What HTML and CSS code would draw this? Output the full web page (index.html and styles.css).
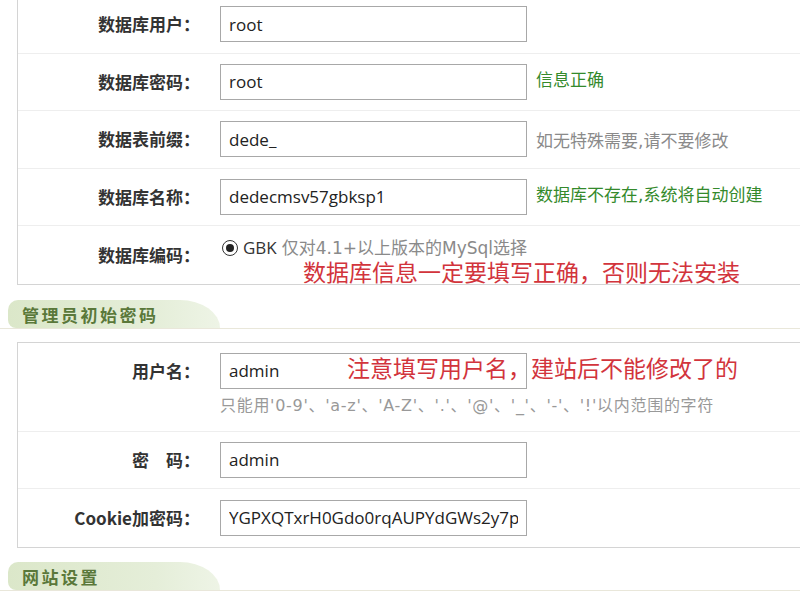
FILE: index.html
```html
<!DOCTYPE html>
<html lang="zh-CN">
  <head>
    <meta charset="UTF-8" />
    <title>安装 - 参数设置</title>
    <link rel="stylesheet" href="styles.css">
  </head>
  <body>
    <div class="box box-first">
      <div class="row">
        <div class="label">数据库用户：</div>
        <div class="field"><input class="txt" type="text" value="root"></div>
      </div>
      <div class="row">
        <div class="label">数据库密码：</div>
        <div class="field">
          <input class="txt" type="text" value="root">
          <span class="tip tip-ok">信息正确</span>
        </div>
      </div>
      <div class="row">
        <div class="label">数据表前缀：</div>
        <div class="field">
          <input class="txt" type="text" value="dede_">
          <span class="tip">如无特殊需要,请不要修改</span>
        </div>
      </div>
      <div class="row">
        <div class="label">数据库名称：</div>
        <div class="field">
          <input class="txt" type="text" value="dedecmsv57gbksp1">
          <span class="tip tip-ok">数据库不存在,系统将自动创建</span>
        </div>
      </div>
      <div class="row">
        <div class="label">数据库编码：</div>
        <div class="field field-radio">
          <span class="radio"></span>
          <span class="gbk">GBK</span>
          <span class="tip tip-inline">仅对4.1+以上版本的MySql选择</span>
        </div>
        <div class="note note-db">数据库信息一定要填写正确，否则无法安装</div>
      </div>
    </div>

    <div class="sect"><div class="tab">管理员初始密码</div></div>

    <div class="box">
      <div class="row row-tall">
        <div class="label">用户名：</div>
        <div class="field field-col">
          <input class="txt" type="text" value="admin">
          <span class="tip tip-small">只能用'0-9'、'a-z'、'A-Z'、'.'、'@'、'_'、'-'、'!'以内范围的字符</span>
        </div>
        <div class="note note-user">注意填写用户名，建站后不能修改了的</div>
      </div>
      <div class="row">
        <div class="label">密&emsp;码：</div>
        <div class="field"><input class="txt" type="text" value="admin"></div>
      </div>
      <div class="row">
        <div class="label">Cookie加密码：</div>
        <div class="field"><input class="txt" type="text" value="YGPXQTxrH0Gdo0rqAUPYdGWs2y7pQw"></div>
      </div>
    </div>

    <div class="sect sect-last"><div class="tab">网站设置</div></div>
  </body>
</html>
```

FILE: styles.css
```css
* {
  margin: 0;
  padding: 0;
  box-sizing: border-box;
}

body {
  background-color: #fff;
  color: #333;
  font-family: "Open Sans", "Noto Sans CJK SC", sans-serif;
  overflow: hidden;
  width: 800px;
  height: 600px;
}

.box {
  width: 900px;
  margin-left: 17px;
  border: 1px solid #d4d4d4;
}
.box-first {
  margin-top: -5px;
}

.row {
  position: relative;
  display: flex;
  align-items: center;
  min-height: 57.5px;
  border-bottom: 1px solid #eeeeee;
}
.row:last-child {
  border-bottom: none;
}
.row-tall {
  align-items: flex-start;
  min-height: 89px;
  padding-top: 10px;
}

.label {
  width: 182px;
  margin-right: 20px;
  text-align: right;
  font-family: "Noto Sans CJK SC", sans-serif;
  font-size: 17px;
  font-weight: bold;
  line-height: 36px;
  color: #333;
}

.field {
  display: flex;
  align-items: center;
}
.field-col {
  flex-direction: column;
  align-items: flex-start;
}
.field-radio {
  padding-bottom: 13px;
}
.field-radio span {
  display: inline-block;
  line-height: 18px;
  height: 18px;
}

.txt {
  width: 307px;
  height: 36px;
  padding: 0 8px;
  border: 1px solid #a8a8a8;
  font-family: "Open Sans", sans-serif;
  font-size: 17px;
  color: #222;
  background: #fff;
  outline: none;
}

.tip {
  margin-left: 9px;
  font-family: "DejaVu Sans", "Noto Sans CJK SC", sans-serif;
  font-size: 17px;
  color: #8a8a8a;
}
.tip-ok {
  color: #348a2c;
  margin-top: -6px;
}
.field-radio .tip-inline {
  margin-left: 5px;
}
.tip-small {
  margin: 7px 0 0;
  font-size: 16px;
  letter-spacing: 0.7px;
  line-height: 20px;
  color: #999;
}

.field-radio .radio {
  width: 16px;
  height: 16px;
  margin: 0 5px 0 2px;
  border: 1.5px solid #333;
  border-radius: 50%;
  position: relative;
}
.radio::after {
  content: "";
  position: absolute;
  left: 2.5px;
  top: 2.5px;
  width: 8px;
  height: 8px;
  border-radius: 50%;
  background: #222;
}
.gbk {
  font-size: 17px;
  color: #333;
}

/* red hand-written notes laid over the form */
.note {
  position: absolute;
  font-family: "DejaVu Sans", "Noto Sans CJK SC", sans-serif;
  font-size: 23px;
  line-height: 25px;
  color: #d2343c;
  white-space: nowrap;
}
.note-db {
  left: 285px;
  top: 35px;
}
.note-user {
  left: 329px;
  top: 14px;
}

.sect {
  margin: 15px 0 13px;
  border-bottom: 1px solid #e9e7da;
}
.sect-last {
  margin-top: 14px;
}

.tab {
  width: 212px;
  height: 28px;
  margin-left: 8px;
  padding-left: 14px;
  font-family: "Noto Sans CJK SC", sans-serif;
  font-size: 17px;
  font-weight: bold;
  line-height: 30px;
  letter-spacing: 2.5px;
  color: #5a783a;
  background: linear-gradient(to right, #dbe7c9, #e5eed9 70%, #eef4e6);
  border-radius: 10px 40px 0 8px / 10px 28px 0 8px;
}
```
